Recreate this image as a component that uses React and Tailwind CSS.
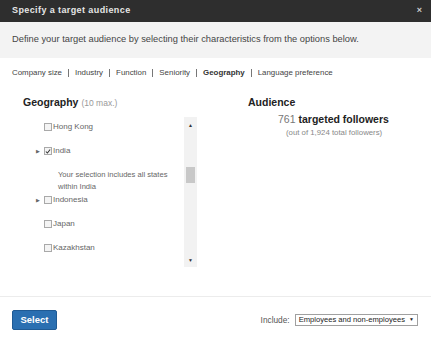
const TABS = ['Company size', 'Industry', 'Function', 'Seniority', 'Geography', 'Language preference'];

function Box({ checked }) {
  return (
    <span className="mr-px inline-flex h-[8px] w-[8px] items-center justify-center border border-[#a9a9a9] bg-[#f4f4f4]">
      {checked && (
        <svg width="7" height="7" viewBox="0 0 7 7">
          <path d="M1 3.5 L2.8 5.3 L6 1.2" stroke="#333" strokeWidth="1.2" fill="none" />
        </svg>
      )}
    </span>
  );
}

function Row({ label, checked, expand, className = '' }) {
  return (
    <div className={`relative flex h-[10px] items-center text-[8px] leading-[10px] text-[#666] ${className}`}>
      {expand && <span className="absolute -left-[8px] top-[2px] text-[5px] leading-[6px] text-[#666]">▶</span>}
      <Box checked={checked} />
      {label}
    </div>
  );
}

export default function App() {
  return (
    <div className="h-[340px] w-[431px] overflow-hidden bg-white font-['Liberation_Sans',Arial,sans-serif]">
      <div className="flex h-[22px] items-center justify-between bg-[#2e2e2e] pl-[12px] pr-[9px]">
        <span className="text-[9px] font-bold tracking-[0.4px] text-[#e6e6e6]">Specify a target audience</span>
        <span className="text-[9px] font-bold text-[#ccc]">×</span>
      </div>
      <div className="flex h-[36px] items-center bg-[#f3f3f3] pl-[12px] text-[9.3px] text-[#454545]">
        Define your target audience by selecting their characteristics from the options below.
      </div>

      <div className="mt-[10px] flex h-[10px] items-center pl-[12px] text-[7.9px] leading-[10px] text-[#444]">
        {TABS.map((t, i) => (
          <span key={t} className="flex items-center">
            {i > 0 && <span className="mx-[6px] h-[8px] w-px bg-[#777]" />}
            <span className={t === 'Geography' ? 'font-bold text-[#333]' : ''}>{t}</span>
          </span>
        ))}
      </div>

      <div className="flex h-[218px] pt-[18px]">
        <div className="w-[225px] pl-[23px]">
          <div className="flex h-[13px] items-baseline gap-[3px] leading-[13px]">
            <span className="text-[10.5px] font-bold text-[#222]">Geography</span>
            <span className="text-[8.5px] text-[#999]">(10 max.)</span>
          </div>
          <div className="mt-[8px] flex h-[150px] w-[174px]">
            <div className="flex-1 pl-[21px] pt-[5px]">
              <Row label="Hong Kong" />
              <Row label="India" checked expand className="mt-[14px]" />
              <div className="mt-[13px] pl-[14px] text-[7.6px] leading-[12px] text-[#666]">
                Your selection includes all states<br />within India
              </div>
              <Row label="Indonesia" expand className="mt-[2px]" />
              <Row label="Japan" className="mt-[14px]" />
              <Row label="Kazakhstan" className="mt-[14px]" />
            </div>
            <div className="flex w-[13px] flex-col items-center bg-[#f2f2f2] pb-[4px] pt-[5px]">
              <span className="text-[5px] leading-[6px] text-[#333]">▲</span>
              <div className="mt-[39px] h-[16px] w-[9px] bg-[#c8c8c8]" />
              <div className="flex-1" />
              <span className="text-[5px] leading-[6px] text-[#333]">▼</span>
            </div>
          </div>
        </div>
        <div className="pl-[23px]">
          <div className="text-[10.5px] font-bold leading-[13px] text-[#222]">Audience</div>
          <div className="mt-[4px] pl-[30px] text-[10.5px] leading-[13px] text-[#222]">
            <span className="text-[#777]">761</span> <span className="font-bold">targeted followers</span>
          </div>
          <div className="mt-[2px] pl-[38px] text-[7.8px] leading-[10px] text-[#888]">(out of 1,924 total followers)</div>
        </div>
      </div>

      <div className="h-px bg-[#ececec]" />
      <div className="flex items-center justify-between pl-[12px] pr-[13px] pt-[13px]">
        <button className="h-[20px] w-[45px] rounded-[2px] border border-[#1f5a94] bg-[#2a6fb1] text-[9.5px] font-bold text-white">
          Select
        </button>
        <div className="flex items-center text-[8.3px] text-[#555]">
          Include:
          <span className="ml-[5px] flex h-[12px] items-center border border-[#a0a0a0] bg-white px-[3px] text-[7.6px] text-[#222]">
            Employees and non-employees <span className="ml-[4px] text-[5px]">▼</span>
          </span>
        </div>
      </div>
    </div>
  );
}
